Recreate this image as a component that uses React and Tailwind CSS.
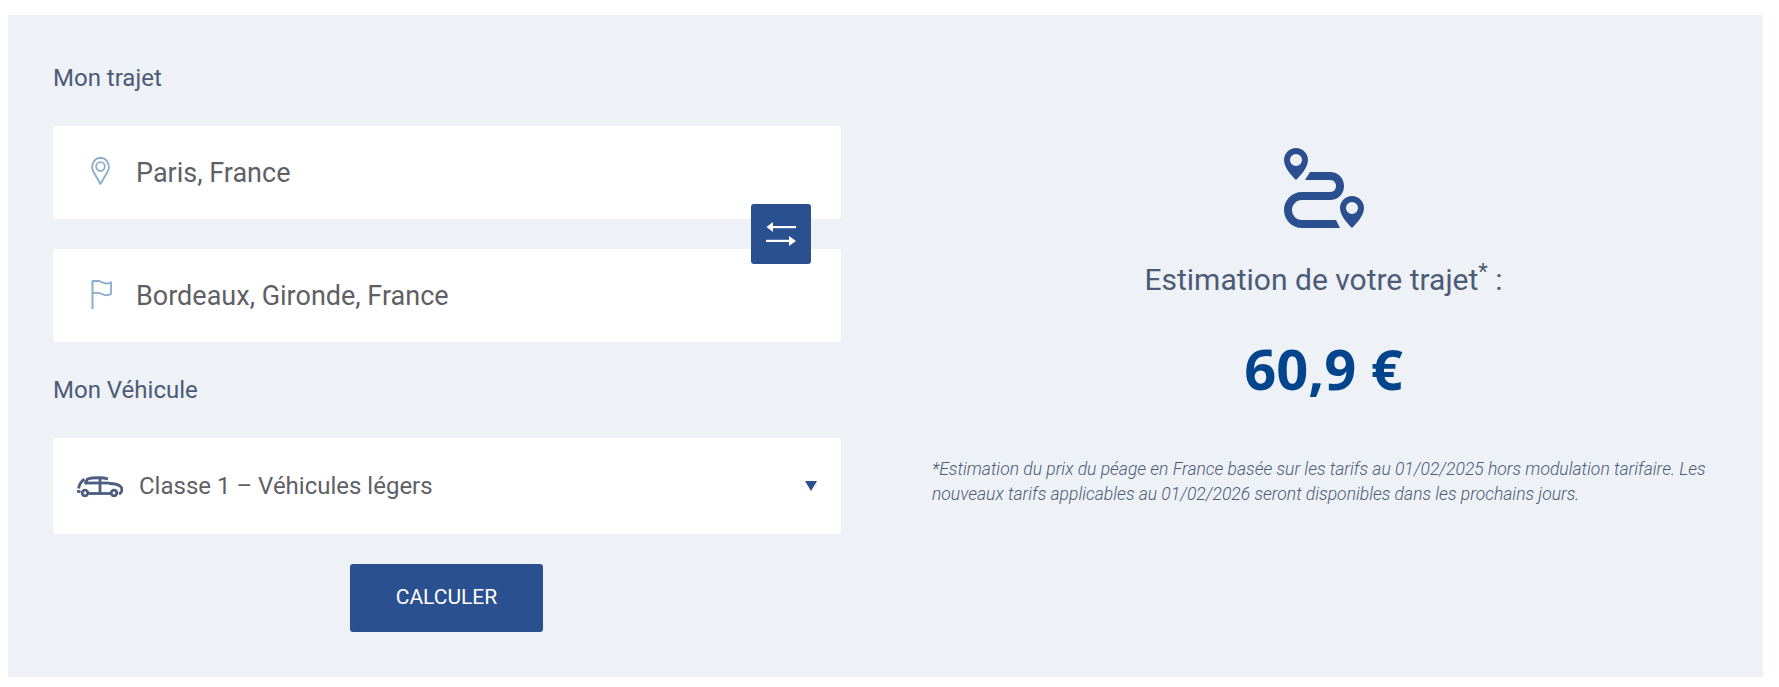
import React from "react";

function Pin() {
  return (
    <svg width="19" height="28" viewBox="0 0 19 28" fill="none" stroke="#8aaccd" strokeWidth="1.8">
      <path d="M9.500 27 L2.300 14.500 C-0.800 8.500 3 1 9.500 0.800 C16 1 19.800 8.500 16.700 14.500 Z" strokeLinejoin="round" />
      <circle cx="9.500" cy="9.500" r="4.300" />
    </svg>
  );
}

function Flag() {
  return (
    <svg width="21" height="29" viewBox="0 0 21 29" fill="none" stroke="#8aaccd" strokeWidth="1.8">
      <path d="M1.500 29 V0.500" strokeWidth="2" />
      <path d="M1.500 1 H7 C10 1 12 3.500 15 3.500 C17 3.500 18.500 3.200 20 2.500 V14 C18.500 15 17 15.300 15 15.300 C12 15.300 10 12.800 7 12.800 H1.500" />
    </svg>
  );
}

function Car() {
  return (
    <svg width="46" height="21" viewBox="0 0 46 21" fill="none" stroke="#4c5d7f" strokeWidth="2.800" strokeLinejoin="round">
      <path d="M1.500 12.500 C2.300 8.500 4.500 5 7.500 3.200" />
      <path d="M0 15.500 H3.500" />
      <path d="M8 8 L10.500 3 C15 1.500 26 1.200 31 3" />
      <path d="M8 7 H32" />
      <path d="M23 2 V17" />
      <path d="M12 17.500 H33" />
      <path d="M32 7.500 C37 7.500 42 8.500 44 11 C45.800 13.500 45 16.500 42 18" />
      <circle cx="8" cy="17" r="2.800" />
      <circle cx="37" cy="17" r="2.800" />
    </svg>
  );
}

function Swap() {
  return (
    <svg width="30" height="24" viewBox="0 0 30 24" fill="white">
      <path d="M5 4 H30 V6.200 H5 Z" />
      <path d="M0.500 5 L7 0 V10 Z" />
      <path d="M0 17.800 H25 V20 H0 Z" />
      <path d="M30 19 L23 14 V24 Z" />
    </svg>
  );
}

const pinShape =
  "M12 0 C5.400 0 0 5.400 0 12 C0 19.500 7.500 27.500 12 32 C16.500 27.500 24 19.500 24 12 C24 5.400 18.600 0 12 0 Z M12 6 A6 6 0 0 1 12 18 A6 6 0 0 1 12 6 Z";

function Route() {
  return (
    <svg width="80" height="80" viewBox="0 0 80 80" fill="#2a5090">
      <path fillRule="evenodd" d={pinShape} />
      <path fillRule="evenodd" d={pinShape} transform="translate(56,48)" />
      <path d="M26 24 L21 32 H46 C50 32 52 35 52 38 C52 41 50 44 46 44 H18 C8 44 0 52 0 62 C0 72 8 80 18 80 H56 L52 72 H18 C12 72 8 67 8 62 C8 57 12 52 18 52 H46 C54 52 60 46 60 38 C60 30 54 24 46 24 Z" />
    </svg>
  );
}

function Field({ icon, children }) {
  return (
    <div className="flex h-[93px] items-center rounded-[3px] bg-white pl-[38px] text-[27px] text-[#5f5f66]">
      <span className="-mt-[3px] flex w-[45px] shrink-0">{icon}</span>
      <span className="pt-[2px]">{children}</span>
    </div>
  );
}

export default function App() {
  return (
    <div className="h-[687px] bg-white pl-2 pr-4 pt-[15px] font-['Roboto',sans-serif]">
      <div className="flex h-[662px] bg-[#eef1f6] pl-[45px]">
        <div className="flex w-[788px] shrink-0 flex-col">
          <div className="mt-[47px] text-[24px] leading-[32px] text-[#4c5b76]">Mon trajet</div>
          <div className="relative mt-[32px] flex flex-col gap-[30px]">
            <Field icon={<Pin />}>Paris, France</Field>
            <Field icon={<Flag />}>Bordeaux, Gironde, France</Field>
            <button className="absolute left-[698px] top-[78px] flex h-[60px] w-[60px] items-center justify-center rounded-[3px] bg-[#2a5090]">
              <Swap />
            </button>
          </div>
          <div className="mt-[32px] text-[24px] leading-[32px] text-[#4c5b76]">Mon Véhicule</div>
          <div className="mt-[32px] flex h-[96px] items-center rounded-[3px] bg-white pl-[24px] pr-[24px] text-[24px] text-[#5f5f66]">
            <Car />
            <span className="ml-[16px]">Classe 1 – Véhicules légers</span>
            <span className="ml-auto h-0 w-0 border-x-[6px] border-t-[10px] border-x-transparent border-t-[#2a5090]" />
          </div>
          <button className="ml-[297px] mt-[30px] h-[68px] w-[193px] rounded-[3px] bg-[#2a5090] text-[21px] text-white">CALCULER</button>
        </div>
        <div className="ml-[91px] flex w-[783px] flex-col items-center">
          <div className="mt-[133px]"><Route /></div>
          <div className="mt-[28px] text-[30px] leading-[48px] text-[#4c5b76]">
            Estimation de votre trajet<sup className="text-[22px]">*</sup> :
          </div>
          <div className="mt-[22px] font-['Open_Sans',sans-serif] text-[56px] font-bold leading-[84px] text-[#03458d]">60,9 €</div>
          <p className="mt-[47px] w-full text-[17.500px] font-light italic leading-[25px] text-[#4c5b76]">
            *Estimation du prix du péage en France basée sur les tarifs au 01/02/2025 hors modulation tarifaire. Les nouveaux tarifs applicables au 01/02/2026 seront disponibles dans les prochains jours.
          </p>
        </div>
      </div>
    </div>
  );
}
